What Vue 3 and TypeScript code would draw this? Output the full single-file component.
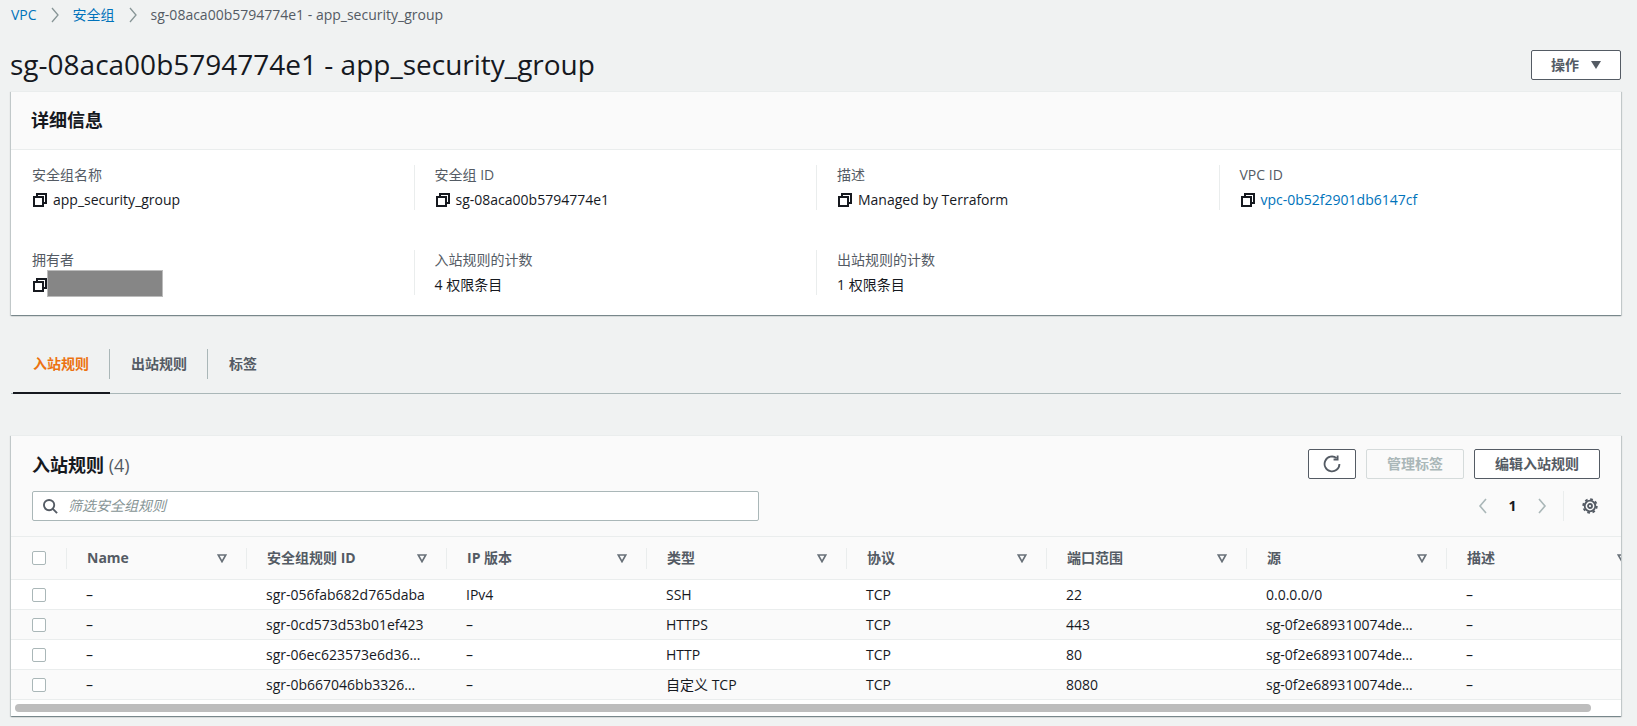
<template>
  <div class="page">
    <nav class="crumbs">
      <a class="link">VPC</a>
      <svg class="crumb-sep" viewBox="0 0 10 16"><path d="M2 1l6 7-6 7" /></svg>
      <a class="link">安全组</a>
      <svg class="crumb-sep" viewBox="0 0 10 16"><path d="M2 1l6 7-6 7" /></svg>
      <span class="crumb-current">sg-08aca00b5794774e1 - app_security_group</span>
    </nav>

    <div class="title-row">
      <h1 class="title">sg-08aca00b5794774e1 - app_security_group</h1>
      <button class="btn btn--actions">
        <span>操作</span>
        <svg class="caret" viewBox="0 0 10 8"><path d="M0 0h10L5 8z" /></svg>
      </button>
    </div>

    <section class="card">
      <header class="card-head">详细信息</header>
      <div class="details">
        <div v-for="item in details" :key="item.label" class="detail">
          <div class="detail-label">{{ item.label }}</div>
          <div class="detail-value">
            <svg v-if="item.copy" class="copy" viewBox="0 0 16 16">
              <path d="M2 5h9v9H2z" />
              <path d="M5 4V2h9v9h-2" />
            </svg>
            <span v-if="item.redacted" class="redacted" />
            <a v-else-if="item.link" class="link">{{ item.value }}</a>
            <span v-else>{{ item.value }}</span>
          </div>
        </div>
      </div>
    </section>

    <div class="tabs">
      <div v-for="(tab, i) in tabs" :key="tab" class="tab" :class="{ 'tab--active': i === 0 }">
        <span class="tab-label">{{ tab }}</span>
      </div>
    </div>

    <section class="card card--table">
      <div class="toolbar">
        <div class="toolbar-row">
          <h2 class="table-title">入站规则 <span class="count">(4)</span></h2>
          <div class="actions">
            <button class="btn btn--icon">
              <svg class="refresh" viewBox="0 0 16 16">
                <path d="M14.6 8a6.6 6.6 0 1 1-2.5-5.2" />
                <path d="M13 0.4v3.6H9.4" />
              </svg>
            </button>
            <button class="btn btn--disabled">管理标签</button>
            <button class="btn">编辑入站规则</button>
          </div>
        </div>
        <div class="toolbar-row toolbar-row--filter">
          <label class="search">
            <svg class="search-icon" viewBox="0 0 16 16">
              <circle cx="6.5" cy="6.5" r="5.5" />
              <path d="M10.5 10.5L15 15" />
            </svg>
            <input class="search-input" placeholder="筛选安全组规则" />
          </label>
          <div class="pager">
            <svg class="pager-arrow" viewBox="0 0 10 16"><path d="M8 1L2 8l6 7" /></svg>
            <span class="pager-num">1</span>
            <svg class="pager-arrow" viewBox="0 0 10 16"><path d="M2 1l6 7-6 7" /></svg>
            <span class="pager-sep" />
            <svg class="gear" viewBox="0 0 16 16">
              <circle class="gear-teeth" cx="8" cy="8" r="6.8" />
              <circle cx="8" cy="8" r="5.3" />
              <circle cx="8" cy="8" r="2" />
            </svg>
          </div>
        </div>
      </div>

      <div class="table-wrap">
        <table class="rules">
          <colgroup>
            <col class="col-check" />
            <col class="col-name" />
            <col v-for="c in 7" :key="c" class="col-data" />
          </colgroup>
          <thead>
            <tr>
              <th class="cell-check"><span class="checkbox" /></th>
              <th v-for="col in columns" :key="col">
                <div class="th-inner">
                  <span>{{ col }}</span>
                  <svg class="filter" viewBox="0 0 10 9"><path d="M1.2 1h7.6L5 7.6z" /></svg>
                </div>
              </th>
            </tr>
          </thead>
          <tbody>
            <tr v-for="rule in rules" :key="rule.id">
              <td class="cell-check"><span class="checkbox" /></td>
              <td>–</td>
              <td>{{ rule.id }}</td>
              <td>{{ rule.ip }}</td>
              <td>{{ rule.type }}</td>
              <td>TCP</td>
              <td>{{ rule.port }}</td>
              <td>{{ rule.source }}</td>
              <td>–</td>
            </tr>
          </tbody>
        </table>
      </div>
      <div class="scroll-track"><div class="scroll-thumb" /></div>
    </section>
  </div>
</template>

<script setup lang="ts">
interface Detail {
  label: string
  value?: string
  copy?: boolean
  link?: boolean
  redacted?: boolean
}

const details: Detail[] = [
  { label: '安全组名称', value: 'app_security_group', copy: true },
  { label: '安全组 ID', value: 'sg-08aca00b5794774e1', copy: true },
  { label: '描述', value: 'Managed by Terraform', copy: true },
  { label: 'VPC ID', value: 'vpc-0b52f2901db6147cf', copy: true, link: true },
  { label: '拥有者', copy: true, redacted: true },
  { label: '入站规则的计数', value: '4 权限条目' },
  { label: '出站规则的计数', value: '1 权限条目' },
]

const tabs = ['入站规则', '出站规则', '标签']

const columns = ['Name', '安全组规则 ID', 'IP 版本', '类型', '协议', '端口范围', '源', '描述']

const rules = [
  { id: 'sgr-056fab682d765daba', ip: 'IPv4', type: 'SSH', port: '22', source: '0.0.0.0/0' },
  { id: 'sgr-0cd573d53b01ef423', ip: '–', type: 'HTTPS', port: '443', source: 'sg-0f2e689310074de…' },
  { id: 'sgr-06ec623573e6d36…', ip: '–', type: 'HTTP', port: '80', source: 'sg-0f2e689310074de…' },
  { id: 'sgr-0b667046bb3326…', ip: '–', type: '自定义 TCP', port: '8080', source: 'sg-0f2e689310074de…' },
]
</script>

<style>
html,
body {
  margin: 0;
  background: #f2f3f3;
}
</style>

<style scoped>
.page {
  box-sizing: border-box;
  width: 1637px;
  height: 726px;
  padding: 5px 16px 0 11px;
  overflow: hidden;
  background: #f0f2f2;
  color: #16191f;
  font-family: "Open Sans", "Noto Sans CJK SC", sans-serif;
  font-size: 14px;
  line-height: 20px;
}

.link {
  color: #0073bb;
}

/* Breadcrumbs */
.crumbs {
  display: flex;
  align-items: center;
  height: 20px;
}

.crumb-sep {
  width: 10px;
  height: 16px;
  margin: 0 13px;
  fill: none;
  stroke: #879596;
  stroke-width: 1.3;
}

.crumb-current {
  color: #545b64;
}

/* Page title */
.title-row {
  display: flex;
  justify-content: space-between;
  align-items: center;
  margin-top: 25px;
}

.title {
  margin: 0 0 2px -1px;
  font-size: 28px;
  font-weight: 400;
  line-height: 28px;
}

.btn {
  box-sizing: border-box;
  height: 30px;
  padding: 0 20px;
  border: 1px solid #545b64;
  border-radius: 2px;
  background: #fff;
  color: #545b64;
  font: bold 14px/20px "Open Sans", "Noto Sans CJK SC", sans-serif;
  white-space: nowrap;
}

.btn--actions {
  display: flex;
  align-items: center;
  gap: 12px;
  width: 90px;
  padding: 0 19px;
}

.btn--disabled {
  border-color: #d5dbdb;
  background: #fafafa;
  color: #aab7b8;
}

.btn--icon {
  display: flex;
  align-items: center;
  justify-content: center;
  width: 48px;
  padding: 0;
}

.caret {
  flex: none;
  width: 10px;
  height: 8px;
  fill: #545b64;
}

.refresh {
  width: 18px;
  height: 18px;
  fill: none;
  stroke: #545b64;
  stroke-width: 1.6;
}

/* Cards */
.card {
  margin-top: 11px;
  background: #fff;
  border-top: 1px solid #eaeded;
  box-shadow: 0 1px 1px 0 rgba(0, 28, 36, 0.3), 1px 1px 1px 0 rgba(0, 28, 36, 0.15), -1px 1px 1px 0 rgba(0, 28, 36, 0.15);
}

.card-head {
  box-sizing: border-box;
  height: 58px;
  padding: 0 20px;
  border-bottom: 1px solid #eaeded;
  background: #fafafa;
  font-size: 18px;
  font-weight: 700;
  line-height: 57px;
}

.details {
  display: grid;
  grid-template-columns: repeat(4, 1fr);
  row-gap: 40px;
  padding: 15px 0 20px;
}

.detail {
  height: 45px;
  padding-left: 20px;
  border-left: 1px solid #eaeded;
}

.detail:first-child,
.detail:nth-child(5) {
  border-left-color: transparent;
}

.detail-label {
  color: #545b64;
}

.detail-value {
  display: flex;
  align-items: center;
  gap: 5px;
  height: 20px;
  margin-top: 5px;
}

.copy {
  flex: none;
  width: 16px;
  height: 16px;
  fill: none;
  stroke: #16191f;
  stroke-width: 2;
}

.redacted {
  box-sizing: border-box;
  width: 116px;
  height: 27px;
  margin: -5px 0 -2px -6px;
  border: 1px solid #bcbcbc;
  background: #868686;
}

/* Tabs */
.tabs {
  display: flex;
  margin-top: 34px;
  padding-left: 2px;
  border-bottom: 1px solid #aab7b8;
}

.tab {
  padding-bottom: 13px;
  border-bottom: 2px solid transparent;
  margin-bottom: -1px;
  color: #545b64;
  font-weight: 700;
}

.tab--active {
  border-bottom-color: #16191f;
  color: #ec7211;
}

.tab-label {
  display: block;
  height: 30px;
  padding: 0 19.5px 0 21.5px;
  border-right: 1px solid #aab7b8;
  line-height: 30px;
}

.tab:first-child .tab-label {
  padding-left: 20px;
}

.tab:last-child .tab-label {
  border-right: 0;
}

/* Rules table */
.card--table {
  margin-top: 41px;
  height: 280px;
}

.toolbar {
  box-sizing: border-box;
  height: 101px;
  padding: 13px 21px 0;
  border-bottom: 1px solid #eaeded;
  background: #fafafa;
}

.toolbar-row {
  display: flex;
  justify-content: space-between;
  align-items: center;
  height: 30px;
}

.toolbar-row--filter {
  margin-top: 12px;
}

.table-title {
  margin: 1px 0 0;
  font-size: 18px;
  font-weight: 700;
  line-height: 30px;
}

.count {
  color: #545b64;
  font-weight: 400;
}

.actions {
  display: flex;
  gap: 10px;
}

.search {
  display: flex;
  align-items: center;
  box-sizing: border-box;
  width: 727px;
  height: 30px;
  padding-left: 10px;
  border: 1px solid #aab7b8;
  border-radius: 2px;
  background: #fff;
}

.search-icon {
  flex: none;
  width: 15px;
  height: 15px;
  fill: none;
  stroke: #545b64;
  stroke-width: 2;
}

.search-input {
  flex: 1;
  margin-left: 10px;
  padding: 0;
  border: 0;
  outline: 0;
  background: transparent;
  font: italic 14px/20px "Open Sans", "Noto Sans CJK SC", sans-serif;
}

.search-input::placeholder {
  color: #879596;
  opacity: 1;
}

.pager {
  display: flex;
  align-items: center;
  height: 30px;
}

.pager-arrow {
  width: 10px;
  height: 16px;
  fill: none;
  stroke: #aab7b8;
  stroke-width: 1.6;
}

.pager-num {
  width: 10px;
  margin: 0 19.5px;
  font-weight: 700;
  text-align: center;
}

.pager-sep {
  height: 30px;
  margin: 0 18px 0 16px;
  border-left: 1px solid #eaeded;
}

.gear {
  width: 16px;
  height: 16px;
  margin-right: 2px;
  fill: none;
  stroke: #545b64;
  stroke-width: 1.8;
}

.gear-teeth {
  stroke-width: 1.8;
  stroke-dasharray: 2.7 2.64;
}

.table-wrap {
  overflow: hidden;
}

.rules {
  width: 1635px;
  border-collapse: collapse;
  table-layout: fixed;
}

.col-check {
  width: 55px;
}

.col-name {
  width: 180px;
}

.col-data {
  width: 200px;
}

.rules th {
  height: 42px;
  padding: 0;
  border-bottom: 1px solid #eaeded;
  background: #fafafa;
  color: #545b64;
  text-align: left;
}

.th-inner {
  display: flex;
  justify-content: space-between;
  align-items: center;
  height: 21px;
  padding: 0 19px 0 20px;
  border-left: 1px solid #eaeded;
}

.filter {
  flex: none;
  width: 10px;
  height: 9px;
  fill: none;
  stroke: #687078;
  stroke-width: 1.7;
}

.rules td {
  height: 29px;
  padding: 0 20px;
  overflow: hidden;
  border-bottom: 1px solid #eaeded;
  white-space: nowrap;
}

.rules tbody tr:nth-child(even) td {
  background: #fafafa;
}

.rules .cell-check {
  padding: 0 0 0 21px;
  text-align: left;
}

.checkbox {
  display: block;
  box-sizing: border-box;
  width: 14px;
  height: 14px;
  border: 1px solid #aab7b8;
  border-radius: 2px;
  background: #fff;
}

.scroll-track {
  box-sizing: border-box;
  height: 15px;
  padding: 4px 30px 3px 4px;
}

.scroll-thumb {
  height: 8px;
  border-radius: 4px;
  background: #bdbdbd;
}
</style>
